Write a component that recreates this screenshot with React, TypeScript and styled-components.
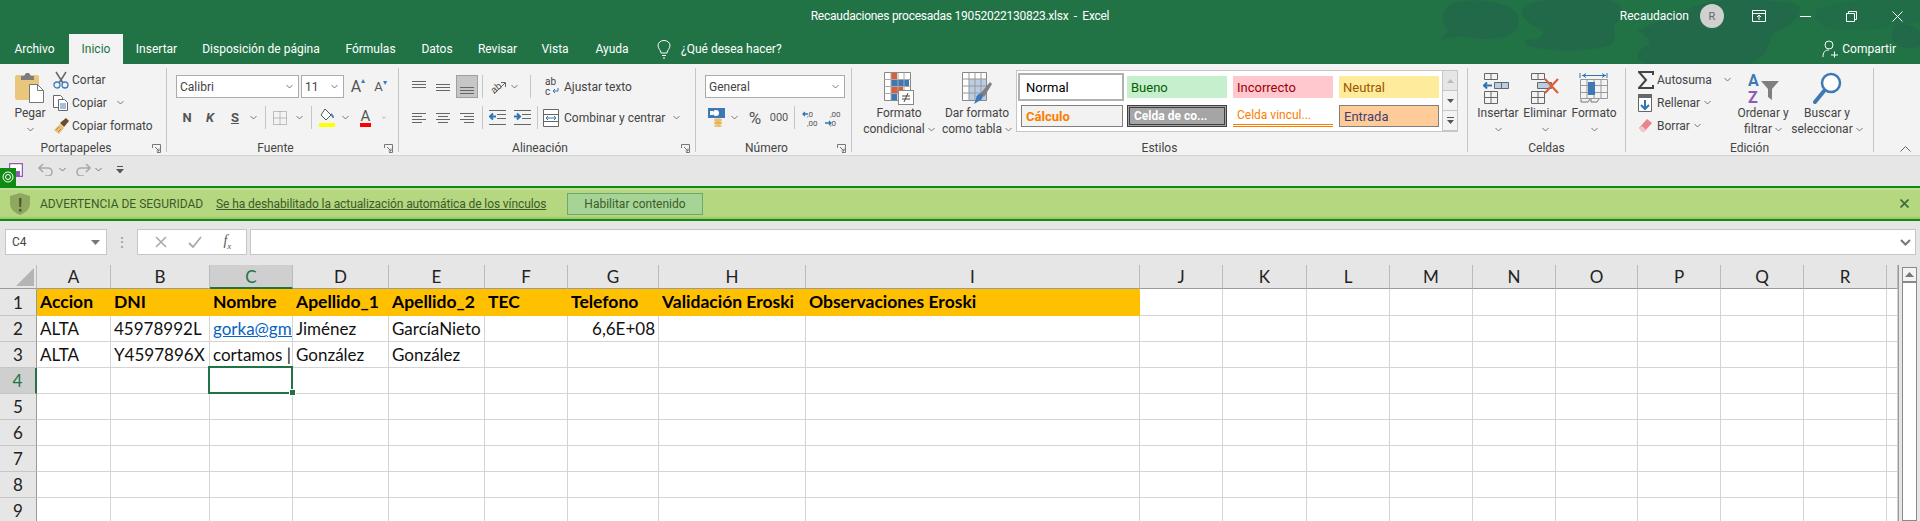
import { FunctionComponent, ReactNode } from "react";
import styled, { createGlobalStyle, css } from "styled-components";

const COLS = [74, 99, 83, 96, 96, 83, 91, 147, 334, 83, 84, 83, 83, 83, 82, 83, 83, 83, 11];
const LETTERS = "ABCDEFGHIJKLMNOPQR".split("").concat("");
const ROWS: Record<number, string[]> = {
  1: ["Accion", "DNI", "Nombre", "Apellido_1", "Apellido_2", "TEC", "Telefono", "Validación Eroski", "Observaciones Eroski"],
  2: ["ALTA", "45978992L", "gorka@gmail.com", "Jiménez", "GarcíaNieto", "", "6,6E+08"],
  3: ["ALTA", "Y4597896X", "cortamos |", "González", "González"],
};

const Chev = () => (
  <svg width="7" height="5" viewBox="0 0 7 5">
    <path d="M.5 1l3 3 3-3" fill="none" stroke="#777" />
  </svg>
);

const Launcher = () => (
  <svg width="9" height="9" viewBox="0 0 9 9">
    <path d="M.5 4V.5h8v8H5M3 3l4 4M7 4.5V7H4.500" fill="none" stroke="#777" />
  </svg>
);

const Lines = ({ rows }: { rows: [number, number, number][] }) => (
  <svg width="16" height="16" viewBox="0 0 16 16">
    {rows.map(([x1, x2, y]) => (
      <path key={y} d={`M${x1} ${y}.5H${x2}`} stroke="#666" />
    ))}
  </svg>
);

const PasteIcon = () => (
  <svg width="30" height="31" viewBox="0 0 30 31">
    <rect y="3" width="24" height="25" rx="2" fill="#eac67c" />
    <path d="M6 4h3l2-3h3l2 3h3v4H6z" fill="#7d7d7d" />
    <path d="M14.5 12.5h8l6 6v12h-14z" fill="#fff" stroke="#777" />
    <path d="M22.5 12.5v6h6" fill="none" stroke="#777" />
  </svg>
);

const CutIcon = () => (
  <svg width="16" height="18" viewBox="0 0 16 18">
    <path d="M3 1l7 11M13 1L6 12" stroke="#666" strokeWidth="1.5" />
    <circle cx="4" cy="14" r="3" fill="none" stroke="#3f7cbf" strokeWidth="1.3" />
    <circle cx="12" cy="14" r="3" fill="none" stroke="#3f7cbf" strokeWidth="1.3" />
  </svg>
);

const CopyIcon = () => (
  <svg width="16" height="16" viewBox="0 0 16 16" fill="#fff" stroke="#666">
    <path d="M.5.5h7l2 2v10h-9z" />
    <path d="M5.5 4.5h6l3 3v8h-9z" />
    <path d="M7 9h6M7 11h6M7 13h6" stroke="#4a7ebb" />
  </svg>
);

const BrushIcon = () => (
  <svg width="17" height="17" viewBox="0 0 17 17">
    <path d="M1 13l6-6 4 4-5 6z" fill="#e8c074" />
    <path d="M7 6l6-5 3 3-5 6z" fill="#6b4b2a" />
    <path d="M3 13l3-3M5 15l3-3" stroke="#b08a40" />
  </svg>
);

const BorderIcon = () => (
  <svg width="14" height="14" viewBox="0 0 14 14">
    <path d="M.5.5h13v13H.5zM7 .5v13M.5 7h13" fill="none" stroke="#888" strokeDasharray="1 1" />
  </svg>
);

const FillIcon = () => (
  <svg width="16" height="19" viewBox="0 0 16 19">
    <path d="M6 1l6 6-5 5-5-5z" fill="#fff" stroke="#555" />
    <path d="M12 5c2 1 3 3 3 5-2 0-3-1-3-5z" fill="#4a7ebb" />
    <rect y="15" width="16" height="4" fill="#ffff00" />
  </svg>
);

const OrientIcon = () => (
  <svg width="18" height="18" viewBox="0 0 18 18">
    <text x="1" y="13" fontFamily="Roboto, sans-serif" fontSize="10" fill="#555" transform="rotate(-40 7 9)">ab</text>
    <path d="M5 16L16 5M12 4.5h4.5V9" fill="none" stroke="#666" />
  </svg>
);

const IndentIcon = ({ out }: { out?: boolean }) => (
  <svg width="17" height="15" viewBox="0 0 17 15">
    <path d="M0 .5h17M8 4.5h9M8 8.5h9M0 14.5h17" stroke="#666" />
    <path d={out ? "M1 6.5h6M4 3.5l-3 3 3 3" : "M0 6.5h6M3 3.5l3 3-3 3"} fill="none" stroke="#2f75b5" strokeWidth="2" />
  </svg>
);

const WrapIcon = () => (
  <svg width="16" height="20" viewBox="0 0 16 20">
    <text x="1" y="8" fontFamily="Roboto, sans-serif" fontSize="10" fill="#444">ab</text>
    <text x="1" y="18" fontFamily="Roboto, sans-serif" fontSize="10" fill="#444">c</text>
    <path d="M14 11v3H9M11 12l-2 2 2 2" fill="none" stroke="#2f75b5" />
  </svg>
);

const MergeIcon = () => (
  <svg width="16" height="18" viewBox="0 0 16 18">
    <path d="M.5.5h15v17H.5zM.5 5.5h15M.5 12.5h15" fill="#fff" stroke="#666" />
    <path d="M3 9h10M5 7L3 9l2 2M11 7l2 2-2 2" fill="none" stroke="#2f75b5" />
  </svg>
);

const MoneyIcon = () => (
  <svg width="17" height="19" viewBox="0 0 17 19">
    <rect width="17" height="10" fill="#3f79b5" />
    <circle cx="8" cy="5" r="3" fill="#fff" />
    <rect x="2" y="3" width="3" height="4" fill="#fff" />
    <ellipse cx="10" cy="12" rx="4" ry="1.8" fill="#e8c074" />
    <ellipse cx="10" cy="15" rx="4" ry="1.8" fill="#e8b45a" />
    <ellipse cx="10" cy="18" rx="4" ry="1" fill="#e8c074" />
  </svg>
);

const DecimalIcon = ({ up }: { up?: boolean }) => (
  <svg width="16" height="18" viewBox="0 0 16 18">
    <text x="5" y="8" fontFamily="Roboto, sans-serif" fontSize="8" fill="#555">{up ? ",0" : ",00"}</text>
    <text x="5" y="17" fontFamily="Roboto, sans-serif" fontSize="8" fill="#555">{up ? ",00" : ",0"}</text>
    <path d={up ? "M1 5h5M3 3L1 5l2 2" : "M0 14h6M4 12l2 2-2 2"} fill="none" stroke="#2f75b5" strokeWidth="1.3" />
  </svg>
);

const CondFormatIcon = () => (
  <svg width="30" height="33" viewBox="0 0 30 33">
    <path d="M.5.5h26v28H.5z" fill="#fff" stroke="#888" />
    <rect x="7" y="1" width="6" height="6" fill="#d9603c" />
    <rect x="7" y="8" width="18" height="6" fill="#3f79b5" />
    <rect x="7" y="15" width="12" height="6" fill="#d9603c" />
    <rect x="7" y="22" width="6" height="6" fill="#3f79b5" />
    <path d="M7 .5v28M14 .5v28M20 .5v28M.5 7.5h26M.5 14.5h26M.5 21.5h26" stroke="#aaa" />
    <rect x="14.5" y="18.5" width="15" height="14" fill="#fff" stroke="#888" />
    <path d="M18 24h8M18 27h8M24 21l-4 9" stroke="#444" />
  </svg>
);

const TableFormatIcon = () => (
  <svg width="30" height="33" viewBox="0 0 30 33">
    <path d="M.5.5h24v28H.5z" fill="#fff" stroke="#888" />
    <rect x="7" y="7" width="17" height="21" fill="#b9cde5" />
    <path d="M7 .5v28M13 .5v28M19 .5v28M.5 7h24M.5 14h24M.5 21h24" stroke="#999" />
    <path d="M18 22l10-12 2 2-8 13z" fill="#7f7f7f" />
    <path d="M14 27c0-4 3-6 6-5 2 2 0 6-3 7l-5 3z" fill="#3f79b5" />
  </svg>
);

const CellBlocks = ({ children }: { children: ReactNode }) => (
  <svg width="30" height="32" viewBox="0 0 30 32" fill="none" stroke="#666">
    {children}
  </svg>
);

const InsertIcon = () => (
  <CellBlocks>
    <path d="M1.5 1.5h13v6h-13zM8 1.5v6M1.5 19.5h13v12h-13zM8 19.5v12M1.5 25.5h13" />
    <path d="M11.5 10.5h14v6h-14zM18.5 10.5v6" fill="#b9cde5" />
    <path d="M1 13.5h8M4 10.5l-3 3 3 3" stroke="#2f75b5" strokeWidth="2" />
  </CellBlocks>
);

const DeleteIcon = () => (
  <CellBlocks>
    <path d="M1.5 1.5h13v6h-13zM8 1.5v6M1.5 19.5h13v12h-13zM8 19.5v12M1.5 25.5h13" />
    <path d="M7.5 10.5h14v6h-14z" fill="#b9cde5" />
    <path d="M15 7l13 14M28 7L15 21" stroke="#d9603c" strokeWidth="2.2" />
  </CellBlocks>
);

const CellFormatIcon = () => (
  <CellBlocks>
    <path d="M1 1v5M28 1v5M3 3.5h24M4 3.5l3-2M4 3.5l3 2M26 3.5l-3-2M26 3.5l-3 2" stroke="#2f75b5" />
    <path d="M1.5 7.5h27v19h-27zM8 7.5v19M15 7.5v19M22 7.5v19M1.5 13.5h27M1.5 20.5h27" stroke="#999" />
    <rect x="9" y="10" width="7" height="13" fill="#3f79b5" stroke="none" />
    <path d="M2 27v3h7l2-3M12 27v3h6l2-3" stroke="#777" />
  </CellBlocks>
);

const SigmaIcon = () => (
  <svg width="16" height="18" viewBox="0 0 16 18">
    <path d="M15 4V1H1l7 8-7 8h14v-3" fill="none" stroke="#444" strokeWidth="2" />
  </svg>
);

const FillDownIcon = () => (
  <svg width="14" height="18" viewBox="0 0 14 18">
    <path d="M.5.5h13v17H.5z" fill="#fff" stroke="#666" />
    <rect width="14" height="4" fill="#666" />
    <path d="M7 6v9M3 11l4 4 4-4" fill="none" stroke="#2f75b5" strokeWidth="2" />
  </svg>
);

const EraserIcon = () => (
  <svg width="15" height="15" viewBox="0 0 15 15">
    <path d="M1 10l8-9 5 4-8 9H4z" fill="#e9848f" />
    <path d="M1 10l3 4h2l2-2-4-4z" fill="#f6c6cb" />
  </svg>
);

const SortIcon = () => (
  <svg width="31" height="32" viewBox="0 0 31 32">
    <text x="0" y="14" fontFamily="Roboto, sans-serif" fontWeight="700" fontSize="16" fill="#3f79b5">A</text>
    <text x="0" y="31" fontFamily="Roboto, sans-serif" fontWeight="700" fontSize="16" fill="#8e5bb5">Z</text>
    <path d="M13 9h18l-7 8v11l-4-3v-8z" fill="#7f7f7f" />
  </svg>
);

const SearchIcon = () => (
  <svg width="29" height="33" viewBox="0 0 29 33" fill="none">
    <circle cx="18" cy="11" r="9" stroke="#3f79b5" strokeWidth="2.5" fill="#fff" />
    <path d="M11 19L2 30" stroke="#3f79b5" strokeWidth="4" strokeLinecap="round" />
  </svg>
);

// dark shapes of the Office background pattern, behind the title bar
const Watermark = () => (
  <svg width="520" height="64" viewBox="0 0 520 64" fill="#22694a">
    <path transform="translate(31 0)" d="M20 4c18-6 46-4 60 4 12 8 10 22-4 28-12 4-34 4-44 0L8 40c6-4 10-8 6-14-4-8-2-18 6-22z" />
    <path transform="translate(17 0)" d="M108 6c10-8 50-8 84-6 18 4 14 18 6 24-4 10 6 16-8 22-20 6-56 6-80 0l-2-6c14 0 24-6 14-12-14-6-22-14-14-22z" />
    <path transform="translate(19 0)" d="M218 30c30-10 60-30 90-30 30 0 64 0 72 6 4 10-10 22-24 26-10 12-4 24-26 32H228c-14-4-10-14 0-18 6-4 0-10-10-16z" />
    <path d="M420 8c30-10 80-10 100-8v22c-30 6-60 10-84 8-18-2-28-16-16-22z" opacity=".6" />
    <path d="M496 26c14-4 24 2 24 8v12c-8 4-20 2-24-2-6-6-6-14 0-18z" />
  </svg>
);

const App: FunctionComponent = () => (
  <Page>
    <GlobalStyle />
    <TitleBar>
      <WatermarkLayer><Watermark /></WatermarkLayer>
      <TitleRow>
        <span />
        <DocTitle>Recaudaciones procesadas 19052022130823.xlsx&nbsp; - &nbsp;Excel</DocTitle>
        <WindowSide>
          <UserName>Recaudacion</UserName>
          <Avatar>R</Avatar>
          <WinButton>
            <svg width="14" height="12" viewBox="0 0 14 12" fill="none" stroke="#fff"><path d="M.5.5h13v11H.5zM.5 3.5h13M7 10V5.5M5 7l2-2 2 2" /></svg>
          </WinButton>
          <WinButton>
            <svg width="11" height="1" viewBox="0 0 11 1"><path d="M0 .5h11" stroke="#fff" /></svg>
          </WinButton>
          <WinButton>
            <svg width="11" height="11" viewBox="0 0 11 11" fill="none" stroke="#fff"><path d="M.5 2.5h8v8h-8zM2.5 2.5v-2h8v8h-2" /></svg>
          </WinButton>
          <WinButton>
            <svg width="11" height="11" viewBox="0 0 11 11" stroke="#fff"><path d="M.5.5l10 10M10.5.5l-10 10" /></svg>
          </WinButton>
        </WindowSide>
      </TitleRow>
      <TabRow>
        <Tab $w={69}>Archivo</Tab>
        <Tab $w={54} $active>Inicio</Tab>
        <Tab $w={67}>Insertar</Tab>
        <Tab $w={142}>Disposición de página</Tab>
        <Tab $w={77}>Fórmulas</Tab>
        <Tab $w={56}>Datos</Tab>
        <Tab $w={65}>Revisar</Tab>
        <Tab $w={50}>Vista</Tab>
        <Tab $w={64}>Ayuda</Tab>
        <TellMe>
          <svg width="14" height="19" viewBox="0 0 14 19" fill="none" stroke="#fff"><path d="M4 13c0-3-3-4-3-7.5a6 5 0 0 1 12 0C13 9 10 10 10 13zM5 15.5h4M6 18h2" /></svg>
          <span>¿Qué desea hacer?</span>
        </TellMe>
        <Share>
          <svg width="16" height="18" viewBox="0 0 16 18" fill="none" stroke="#fff"><circle cx="7" cy="5" r="4" /><path d="M1 17c0-5 2-7 6-7M9 15h7M12.5 11.5v6" /></svg>
          <span>Compartir</span>
        </Share>
      </TabRow>
    </TitleBar>

    <Ribbon>
      <Group $w={167}>
        <GroupBody $left={14}>
          <BigButton $w={32}>
            <BigIcon><PasteIcon /></BigIcon>
            <BigLine>Pegar</BigLine>
            <BigLine><Chev /></BigLine>
          </BigButton>
          <SmallColumn $ml={7}>
            <SmallButton><IconSlot><CutIcon /></IconSlot>Cortar</SmallButton>
            <SmallButton><IconSlot><CopyIcon /></IconSlot>Copiar<ChevGap $w={10}><Chev /></ChevGap></SmallButton>
            <SmallButton><IconSlot><BrushIcon /></IconSlot>Copiar formato</SmallButton>
          </SmallColumn>
        </GroupBody>
        <GroupFoot><FootLabel>Portapapeles</FootLabel><FootLauncher><Launcher /></FootLauncher></GroupFoot>
      </Group>

      <Group $w={232}>
        <GroupRows $left={9}>
          <ToolRow>
            <SelectBox $w={123}>Calibri<Chev /></SelectBox>
            <SelectBox $w={43} $ml={2}>11<Chev /></SelectBox>
            <Slot $w={22} $ml={3}><GrowA $size={16}>A<sup>▴</sup></GrowA></Slot>
            <Slot $w={23}><GrowA $size={13}>A<sup>▾</sup></GrowA></Slot>
          </ToolRow>
          <ToolRow>
            <Slot $w={22}><FontMark $weight={700}>N</FontMark></Slot>
            <Slot $w={24}><FontMark $weight={700} $italic>K</FontMark></Slot>
            <Slot $w={26}><FontMark $weight={700} $underline>S</FontMark></Slot>
            <Slot $w={10}><Chev /></Slot>
            <Slot $w={14}><Sep /></Slot>
            <Slot $w={16}><BorderIcon /></Slot>
            <Slot $w={22}><Chev /></Slot>
            <Slot $w={2}><Sep /></Slot>
            <Slot $w={29}><FillIcon /></Slot>
            <Slot $w={8}><Chev /></Slot>
            <Slot $w={33}><ColorA>A</ColorA></Slot>
            <Slot $w={4}><Chev /></Slot>
          </ToolRow>
        </GroupRows>
        <GroupFoot><FootLabel>Fuente</FootLabel><FootLauncher><Launcher /></FootLauncher></GroupFoot>
      </Group>

      <Group $w={297}>
        <GroupRows $left={8}>
          <ToolRow>
            <Slot $w={24}><Lines rows={[[1, 15, 2], [1, 15, 5], [1, 15, 8]]} /></Slot>
            <Slot $w={24}><Lines rows={[[1, 15, 5], [1, 15, 8], [1, 15, 11]]} /></Slot>
            <ActiveSlot><Lines rows={[[1, 15, 8], [1, 15, 11], [1, 15, 14]]} /></ActiveSlot>
            <Slot $w={8}><Sep /></Slot>
            <Slot $w={24}><OrientIcon /></Slot>
            <Slot $w={8}><Chev /></Slot>
            <Slot $w={25}><Sep /></Slot>
            <Slot $w={18}><WrapIcon /></Slot>
            <WideText $ml={3}>Ajustar texto</WideText>
          </ToolRow>
          <ToolRow>
            <Slot $w={24}><Lines rows={[[1, 15, 3], [1, 11, 6], [1, 15, 9], [1, 11, 12]]} /></Slot>
            <Slot $w={24}><Lines rows={[[1, 15, 3], [3, 13, 6], [1, 15, 9], [3, 13, 12]]} /></Slot>
            <Slot $w={24}><Lines rows={[[1, 15, 3], [5, 15, 6], [1, 15, 9], [5, 15, 12]]} /></Slot>
            <Slot $w={6}><Sep /></Slot>
            <Slot $w={25}><IndentIcon out /></Slot>
            <Slot $w={24}><IndentIcon /></Slot>
            <Slot $w={6}><Sep /></Slot>
            <Slot $w={21}><MergeIcon /></Slot>
            <WideText $ml={3}>Combinar y centrar</WideText>
            <ChevGap $w={8}><Chev /></ChevGap>
          </ToolRow>
        </GroupRows>
        <GroupFoot><FootLabel>Alineación</FootLabel><FootLauncher><Launcher /></FootLauncher></GroupFoot>
      </Group>

      <Group $w={156}>
        <GroupRows $left={9}>
          <ToolRow>
            <SelectBox $w={140}>General<Chev /></SelectBox>
          </ToolRow>
          <ToolRow>
            <Slot $w={22}><MoneyIcon /></Slot>
            <Slot $w={14}><Chev /></Slot>
            <Slot $w={28}><FontMark $weight={400} $size={17}>%</FontMark></Slot>
            <Slot $w={20}><FontMark $weight={400} $size={11}>000</FontMark></Slot>
            <Slot $w={10}><Sep /></Slot>
            <Slot $w={22}><DecimalIcon up /></Slot>
            <Slot $w={24}><DecimalIcon /></Slot>
          </ToolRow>
        </GroupRows>
        <GroupFoot><FootLabel>Número</FootLabel><FootLauncher><Launcher /></FootLauncher></GroupFoot>
      </Group>

      <Group $w={616}>
        <GroupBody $left={4}>
          <BigButton $w={86}>
            <BigIcon><CondFormatIcon /></BigIcon>
            <BigLine>Formato</BigLine>
            <BigLine>condicional <Chev /></BigLine>
          </BigButton>
          <BigButton $w={70}>
            <BigIcon><TableFormatIcon /></BigIcon>
            <BigLine>Dar formato</BigLine>
            <BigLine>como tabla <Chev /></BigLine>
          </BigButton>
          <Gallery>
            <GalleryGrid>
              <StyleItem $kind="normal">Normal</StyleItem>
              <StyleItem $kind="good">Bueno</StyleItem>
              <StyleItem $kind="bad">Incorrecto</StyleItem>
              <StyleItem $kind="neutral">Neutral</StyleItem>
              <StyleItem $kind="calc">Cálculo</StyleItem>
              <StyleItem $kind="check">Celda de co...</StyleItem>
              <StyleItem $kind="linked">Celda vincul...</StyleItem>
              <StyleItem $kind="input">Entrada</StyleItem>
            </GalleryGrid>
            <GalleryScroll>
              <GalleryArrow $dim>
                <svg width="7" height="4" viewBox="0 0 7 4"><path d="M3.5 0L7 4H0z" fill="#bbb" /></svg>
              </GalleryArrow>
              <GalleryArrow>
                <svg width="7" height="4" viewBox="0 0 7 4"><path d="M0 0h7L3.500 4z" fill="#555" /></svg>
              </GalleryArrow>
              <GalleryArrow>
                <svg width="7" height="7" viewBox="0 0 7 7"><path d="M0 .5h7" stroke="#555" /><path d="M0 3h7L3.500 7z" fill="#555" /></svg>
              </GalleryArrow>
            </GalleryScroll>
          </Gallery>
        </GroupBody>
        <GroupFoot><FootLabel>Estilos</FootLabel></GroupFoot>
      </Group>

      <Group $w={158}>
        <GroupBody $left={6}>
          <BigButton $w={48}>
            <BigIcon><InsertIcon /></BigIcon>
            <BigLine>Insertar</BigLine>
            <BigLine><Chev /></BigLine>
          </BigButton>
          <BigButton $w={46}>
            <BigIcon><DeleteIcon /></BigIcon>
            <BigLine>Eliminar</BigLine>
            <BigLine><Chev /></BigLine>
          </BigButton>
          <BigButton $w={52}>
            <BigIcon><CellFormatIcon /></BigIcon>
            <BigLine>Formato</BigLine>
            <BigLine><Chev /></BigLine>
          </BigButton>
        </GroupBody>
        <GroupFoot><FootLabel>Celdas</FootLabel></GroupFoot>
      </Group>

      <Group $w={248}>
        <GroupBody $left={12}>
          <SmallColumn $w={96}>
            <SmallButton><IconSlot><SigmaIcon /></IconSlot>Autosuma<ChevGap $w={12}><Chev /></ChevGap></SmallButton>
            <SmallButton><IconSlot><FillDownIcon /></IconSlot>Rellenar<ChevGap $w={4}><Chev /></ChevGap></SmallButton>
            <SmallButton><IconSlot><EraserIcon /></IconSlot>Borrar<ChevGap $w={4}><Chev /></ChevGap></SmallButton>
          </SmallColumn>
          <BigButton $w={58}>
            <BigIcon><SortIcon /></BigIcon>
            <BigLine>Ordenar y</BigLine>
            <BigLine>filtrar <Chev /></BigLine>
          </BigButton>
          <BigButton $w={70}>
            <BigIcon><SearchIcon /></BigIcon>
            <BigLine>Buscar y</BigLine>
            <BigLine>seleccionar <Chev /></BigLine>
          </BigButton>
        </GroupBody>
        <GroupFoot><FootLabel>Edición</FootLabel></GroupFoot>
      </Group>

      <CollapseCell>
        <svg width="11" height="6" viewBox="0 0 11 6"><path d="M.5 5.5l5-5 5 5" fill="none" stroke="#666" /></svg>
      </CollapseCell>
    </Ribbon>

    <QuickBar>
      <QuickBadge>
        <svg width="12" height="12" viewBox="0 0 12 12" fill="none" stroke="#fff"><circle cx="6" cy="6" r="5" /><circle cx="6" cy="6" r="2.5" /></svg>
      </QuickBadge>
      <Slot $w={14} $ml={9}>
        <svg width="14" height="14" viewBox="0 0 14 14"><path d="M.5.5h13v13H.5z" fill="#fff" stroke="#8e5bb5" strokeWidth="1.5" /><rect x="3" y="8" width="8" height="6" fill="#8e5bb5" /></svg>
      </Slot>
      <Slot $w={16} $ml={14}>
        <svg width="15" height="13" viewBox="0 0 15 13" fill="none" stroke="#aaa" strokeWidth="1.6"><path d="M1 5h9a4 4 0 0 1 0 8H7M5 1L1 5l4 4" /></svg>
      </Slot>
      <Slot $w={14} $ml={2}><Chev /></Slot>
      <Slot $w={16} $ml={6}>
        <svg width="15" height="13" viewBox="0 0 15 13" fill="none" stroke="#aaa" strokeWidth="1.6"><path d="M14 5H5a4 4 0 0 0 0 8h3M10 1l4 4-4 4" /></svg>
      </Slot>
      <Slot $w={14}><Chev /></Slot>
      <Slot $w={12} $ml={9}>
        <svg width="8" height="8" viewBox="0 0 8 8"><path d="M1 .5h6" stroke="#555" /><path d="M0 3h8L4 7.5z" fill="#555" /></svg>
      </Slot>
    </QuickBar>

    <MessageBar>
      <svg width="20" height="22" viewBox="0 0 20 22">
        <path d="M10 0l10 3v8c0 5-5 9-10 11C5 20 0 16 0 11V3z" fill="#8fa860" />
        <path d="M9 5h2.5l-.3 9H9.3zM9 16h2.5v2.5H9z" fill="#4f5a28" />
      </svg>
      <MessageTitle>ADVERTENCIA DE SEGURIDAD</MessageTitle>
      <MessageLink>Se ha deshabilitado la actualización automática de los vínculos</MessageLink>
      <EnableButton>Habilitar contenido</EnableButton>
      <MessageClose>
        <svg width="9" height="9" viewBox="0 0 9 9" stroke="#3f6e3a" strokeWidth="1.8"><path d="M.5.5l8 8M8.5.5l-8 8" /></svg>
      </MessageClose>
    </MessageBar>

    <FormulaBar>
      <NameBox>C4<svg width="9" height="5" viewBox="0 0 9 5"><path d="M0 0h9L4.5 5z" fill="#777" /></svg></NameBox>
      <FormulaDots>⋮</FormulaDots>
      <FormulaTools>
        <svg width="12" height="12" viewBox="0 0 12 12" stroke="#aaa" strokeWidth="1.6"><path d="M1 1l10 10M11 1L1 11" /></svg>
        <svg width="14" height="12" viewBox="0 0 14 12" fill="none" stroke="#aaa" strokeWidth="1.8"><path d="M1 7l4 4 8-10" /></svg>
        <FxMark>f<sub>x</sub></FxMark>
      </FormulaTools>
      <FormulaInput>
        <svg width="11" height="7" viewBox="0 0 11 7" fill="none" stroke="#777" strokeWidth="2"><path d="M1 1l4.5 4.5L10 1" /></svg>
      </FormulaInput>
    </FormulaBar>

    <SheetArea>
      <SheetGrid>
        <Corner><svg width="18" height="18" viewBox="0 0 18 18"><path d="M18 0v18H0z" fill="#b4b4b4" /></svg></Corner>
        {LETTERS.map((l, i) => (
          <ColHead key={i} $selected={l === "C"}>{l}</ColHead>
        ))}
        {[1, 2, 3, 4, 5, 6, 7, 8, 9].map(r => (
          <SheetRow key={r} row={r} />
        ))}
      </SheetGrid>
      <ScrollTrack>
        <ScrollBox>
          <ScrollUp><svg width="9" height="5" viewBox="0 0 9 5"><path d="M4.5 0L9 5H0z" fill="#777" /></svg></ScrollUp>
        </ScrollBox>
      </ScrollTrack>
    </SheetArea>
  </Page>
);

const SheetRow: FunctionComponent<{ row: number }> = ({ row }) => (
  <>
    <RowHead $selected={row === 4}>{row}</RowHead>
    {LETTERS.map((_, c) => {
      const value = ROWS[row]?.[c] ?? "";
      return (
        <Cell
          key={c}
          $head={row === 1 && c < 9}
          $link={row === 2 && c === 2}
          $right={row === 2 && c === 6}
          $active={row === 4 && c === 2}
        >
          {value}
        </Cell>
      );
    })}
  </>
);

const GlobalStyle = createGlobalStyle`
  html, body { margin: 0; padding: 0; background: #fff; }
  body { font-family: Roboto, "Liberation Sans", sans-serif; font-size: 12px; color: #444; }
`;

const Page = styled.div`
  width: 1920px;
  height: 521px;
  overflow: hidden;
  display: flex;
  flex-direction: column;
  position: relative;
`;

const TitleBar = styled.header`
  position: relative;
  height: 64px;
  background: #217346;
  color: #fff;
  flex: none;
`;

const WatermarkLayer = styled.div`
  position: absolute;
  right: 0;
  top: 0;
  height: 64px;
  line-height: 0;
`;

const TitleRow = styled.div`
  position: relative;
  height: 32px;
  display: grid;
  grid-template-columns: 1fr auto 1fr;
  align-items: center;
`;

const DocTitle = styled.div`
  font-size: 12px;
  letter-spacing: -0.25px;
  white-space: nowrap;
`;

const WindowSide = styled.div`
  display: flex;
  justify-content: flex-end;
  align-items: center;
`;

const UserName = styled.span`
  margin-right: 11px;
`;

const Avatar = styled.div`
  width: 24px;
  height: 24px;
  border-radius: 50%;
  background: #d0d0d0;
  color: #666;
  font-size: 11px;
  display: flex;
  align-items: center;
  justify-content: center;
  margin-right: 12px;
`;

const WinButton = styled.div`
  width: 46px;
  height: 30px;
  display: flex;
  align-items: center;
  justify-content: center;
`;

const TabRow = styled.nav`
  position: relative;
  display: flex;
  height: 32px;
  align-items: flex-end;
`;

const Tab = styled.div<{ $w: number; $active?: boolean }>`
  width: ${p => p.$w}px;
  height: 30px;
  display: flex;
  align-items: center;
  justify-content: center;
  font-size: 12px;
  ${p => p.$active && css`
    background: #f3f3f3;
    color: #217346;
  `}
`;

const TellMe = styled.div`
  display: flex;
  align-items: center;
  height: 30px;
  gap: 10px;
  margin-left: 13px;
`;

const Share = styled.div`
  margin-left: auto;
  margin-right: 24px;
  height: 30px;
  display: flex;
  align-items: center;
  gap: 4px;
`;

const Ribbon = styled.section`
  flex: none;
  height: 92px;
  box-sizing: border-box;
  display: flex;
  background: #f3f3f3;
  border-bottom: 1px solid #d2d2d2;
  padding-top: 4px;
`;

const Group = styled.div<{ $w: number }>`
  position: relative;
  width: ${p => p.$w}px;
  height: 84px;
  box-sizing: border-box;
  border-right: 1px solid #c6c6c6;
  flex: none;
  display: flex;
  flex-direction: column;
`;

const GroupBody = styled.div<{ $left: number }>`
  height: 72px;
  display: flex;
  padding-left: ${p => p.$left}px;
`;

const GroupRows = styled.div<{ $left: number }>`
  height: 72px;
  box-sizing: border-box;
  padding: 7px 0 0 ${p => p.$left}px;
  display: flex;
  flex-direction: column;
  gap: 8px;
`;

const GroupFoot = styled.div`
  display: flex;
  height: 12px;
  line-height: 16px;
`;

const FootLabel = styled.div`
  flex: 1;
  text-align: center;
  color: #444;
`;

const FootLauncher = styled.div`
  width: 14px;
  padding-top: 4px;
  line-height: 0;
`;

const BigButton = styled.div<{ $w: number }>`
  width: ${p => p.$w}px;
  flex: none;
  padding-top: 4px;
  display: flex;
  flex-direction: column;
  align-items: center;
`;

const BigIcon = styled.div`
  height: 33px;
  line-height: 0;
`;

const BigLine = styled.div`
  height: 16px;
  line-height: 16px;
  white-space: nowrap;
  display: flex;
  align-items: center;
  gap: 3px;
`;

const SmallColumn = styled.div<{ $ml?: number; $w?: number }>`
  display: flex;
  flex-direction: column;
  margin-left: ${p => p.$ml ?? 0}px;
  width: ${p => (p.$w ? `${p.$w}px` : "auto")};
`;

const SmallButton = styled.div`
  height: 23px;
  display: flex;
  align-items: center;
  white-space: nowrap;
`;

const IconSlot = styled.span`
  width: 19px;
  display: flex;
  justify-content: flex-start;
`;

const ChevGap = styled.span<{ $w: number }>`
  display: inline-flex;
  margin-left: ${p => p.$w}px;
`;

const ToolRow = styled.div`
  display: flex;
  height: 23px;
  align-items: center;
`;

const Slot = styled.div<{ $w: number; $ml?: number }>`
  width: ${p => p.$w}px;
  margin-left: ${p => p.$ml ?? 0}px;
  flex: none;
  display: flex;
  align-items: center;
  justify-content: center;
`;

const ActiveSlot = styled.div`
  width: 22px;
  height: 23px;
  margin-left: 1px;
  box-sizing: border-box;
  background: #c6c6c6;
  border: 1px solid #a0a0a0;
  display: flex;
  align-items: center;
  justify-content: center;
`;

const Sep = styled.div`
  width: 1px;
  height: 23px;
  background: #c6c6c6;
`;

const SelectBox = styled.div<{ $w: number; $ml?: number }>`
  width: ${p => p.$w}px;
  height: 23px;
  margin-left: ${p => p.$ml ?? 0}px;
  box-sizing: border-box;
  background: #fff;
  border: 1px solid #ababab;
  padding: 0 5px 0 3px;
  display: flex;
  align-items: center;
  justify-content: space-between;
`;

const GrowA = styled.span<{ $size: number }>`
  font-size: ${p => p.$size}px;
  color: #555;
  sup {
    font-size: 8px;
    color: #3f79b5;
    vertical-align: top;
    line-height: 8px;
  }
`;

const FontMark = styled.span<{ $weight: number; $italic?: boolean; $underline?: boolean; $size?: number }>`
  font-size: ${p => p.$size ?? 13}px;
  font-weight: ${p => p.$weight};
  font-style: ${p => (p.$italic ? "italic" : "normal")};
  text-decoration: ${p => (p.$underline ? "underline" : "none")};
  color: #555;
`;

const ColorA = styled.span`
  font-size: 15px;
  line-height: 14px;
  color: #555;
  border-bottom: 4px solid #ff0000;
  padding: 0 1px;
`;

const WideText = styled.span<{ $ml: number }>`
  margin-left: ${p => p.$ml}px;
  white-space: nowrap;
`;

const Gallery = styled.div`
  width: 442px;
  height: 62px;
  margin: 2px 0 0 4px;
  box-sizing: border-box;
  background: #fff;
  border: 1px solid #c6c6c6;
  display: flex;
  justify-content: space-between;
  flex: none;
`;

const GalleryGrid = styled.div`
  display: grid;
  grid-template-columns: 109px 106px 106px 100px;
  grid-template-rows: 30px 28px;
  padding: 1px 0 0 1px;
  font-size: 13px;
`;

const KINDS = {
  normal: css`width: 106px; height: 28px; background: #fff; border: 2px solid #b0b0b0; color: #000; padding-left: 6px;`,
  good: css`width: 100px; height: 22px; background: #c6efce; color: #006100;`,
  bad: css`width: 100px; height: 22px; background: #ffc7ce; color: #9c0006;`,
  neutral: css`width: 100px; height: 22px; background: #ffeb9c; color: #9c5700;`,
  calc: css`width: 102px; height: 22px; margin-left: 3px; background: #f2f2f2; border: 1px solid #7f7f7f; color: #fa7d00; font-weight: 700;`,
  check: css`width: 100px; height: 22px; background: #a5a5a5; border: 3px double #3f3f3f; color: #fff; font-weight: 700; font-size: 12px;`,
  linked: css`width: 100px; height: 22px; border-bottom: 3px double #fa7d00; color: #fa7d00; font-size: 12px;`,
  input: css`width: 100px; height: 22px; background: #ffcc99; border: 1px solid #7f7f7f; color: #3f3f76;`,
};

const StyleItem = styled.div<{ $kind: keyof typeof KINDS }>`
  box-sizing: border-box;
  display: flex;
  align-items: center;
  padding-left: 4px;
  align-self: center;
  white-space: nowrap;
  ${p => KINDS[p.$kind]}
`;

const GalleryScroll = styled.div`
  width: 14px;
  display: grid;
  grid-template-rows: repeat(3, 1fr);
  background: #f3f3f3;
  border-left: 1px solid #c6c6c6;
`;

const GalleryArrow = styled.div<{ $dim?: boolean }>`
  display: flex;
  align-items: center;
  justify-content: center;
  background: ${p => (p.$dim ? "#e6e6e6" : "#f3f3f3")};
  border-bottom: 1px solid #c6c6c6;
`;

const CollapseCell = styled.div`
  flex: 1;
  height: 84px;
  display: flex;
  align-items: flex-end;
  justify-content: flex-end;
  padding: 0 9px 0 0;
`;

const QuickBar = styled.div`
  flex: none;
  height: 30px;
  box-sizing: border-box;
  padding-bottom: 3px;
  background: #e6e6e6;
  display: flex;
  align-items: center;
  position: relative;
`;

const QuickBadge = styled.div`
  position: absolute;
  left: 0;
  top: 12px;
  width: 16px;
  height: 18px;
  background: #0f8a13;
  display: flex;
  align-items: center;
  justify-content: center;
  z-index: 1;
`;

const MessageBar = styled.div`
  flex: none;
  height: 35px;
  box-sizing: border-box;
  background: #b5d77f;
  border-top: 2px solid #0f8a13;
  border-bottom: 2px solid #0f8a13;
  box-shadow: inset 0 2px 0 #c3dd97, inset 0 -2px 0 #a4c86e;
  display: flex;
  align-items: center;
  padding-left: 10px;
  color: #3d5a2a;
`;

const MessageTitle = styled.span`
  margin-left: 10px;
  width: 176px;
  white-space: nowrap;
`;

const MessageLink = styled.span`
  text-decoration: underline;
  width: 351px;
  letter-spacing: -0.1px;
  white-space: nowrap;
`;

const EnableButton = styled.div`
  width: 136px;
  height: 22px;
  box-sizing: border-box;
  background: #a6d496;
  border: 1px solid #6fa86f;
  display: flex;
  align-items: center;
  justify-content: center;
`;

const MessageClose = styled.div`
  margin-left: auto;
  margin-right: 11px;
  line-height: 0;
`;

const FormulaBar = styled.div`
  flex: none;
  height: 44px;
  box-sizing: border-box;
  background: #e6e6e6;
  padding: 8px 4px 10px 5px;
  display: flex;
`;

const NameBox = styled.div`
  width: 102px;
  box-sizing: border-box;
  background: #fff;
  border: 1px solid #c6c6c6;
  padding: 0 6px;
  display: flex;
  align-items: center;
  justify-content: space-between;
  color: #444;
`;

const FormulaDots = styled.div`
  width: 30px;
  text-align: center;
  line-height: 26px;
  color: #999;
  font-size: 14px;
`;

const FormulaTools = styled.div`
  width: 110px;
  box-sizing: border-box;
  background: #fff;
  border: 1px solid #c6c6c6;
  display: flex;
  align-items: center;
  justify-content: space-around;
  padding: 0 4px 0 6px;
`;

const FxMark = styled.i`
  font-family: "Liberation Serif", serif;
  font-size: 14px;
  color: #555;
  sub {
    font-size: 9px;
  }
`;

const FormulaInput = styled.div`
  flex: 1;
  margin-left: 3px;
  box-sizing: border-box;
  background: #fff;
  border: 1px solid #c6c6c6;
  display: flex;
  align-items: center;
  justify-content: flex-end;
  padding-right: 4px;
`;

const SheetArea = styled.div`
  flex: 1;
  display: flex;
  min-height: 0;
  background: #e6e6e6;
`;

const SheetGrid = styled.div`
  width: 1899px;
  flex: none;
  display: grid;
  grid-template-columns: 37px ${COLS.map(c => `${c}px`).join(" ")};
  grid-template-rows: 24px 27px repeat(8, 26px);
  font-family: Lato, "Liberation Sans", sans-serif;
  font-size: 17px;
  color: #111;
  overflow: hidden;
  border-right: 1px solid #999;
  box-sizing: border-box;
`;

const Corner = styled.div`
  box-sizing: border-box;
  background: #e6e6e6;
  border-right: 1px solid #bbb;
  border-bottom: 1px solid #9a9a9a;
  display: flex;
  align-items: flex-end;
  justify-content: flex-end;
  padding: 0 2px 2px 0;
  line-height: 0;
`;

const ColHead = styled.div<{ $selected?: boolean }>`
  box-sizing: border-box;
  background: ${p => (p.$selected ? "#cfcfcf" : "#e6e6e6")};
  color: ${p => (p.$selected ? "#217346" : "#222")};
  border-right: 1px solid #bbb;
  border-bottom: ${p => (p.$selected ? "2px solid #217346" : "1px solid #9a9a9a")};
  display: flex;
  align-items: center;
  justify-content: center;
`;

const RowHead = styled.div<{ $selected?: boolean }>`
  box-sizing: border-box;
  background: ${p => (p.$selected ? "#cfcfcf" : "#e6e6e6")};
  color: ${p => (p.$selected ? "#217346" : "#222")};
  border-right: ${p => (p.$selected ? "2px solid #217346" : "1px solid #9a9a9a")};
  border-bottom: 1px solid #c6c6c6;
  display: flex;
  align-items: center;
  justify-content: center;
`;

const Cell = styled.div<{ $head?: boolean; $link?: boolean; $right?: boolean; $active?: boolean }>`
  position: relative;
  box-sizing: border-box;
  background: #fff;
  border-right: 1px solid #d4d4d4;
  border-bottom: 1px solid #d4d4d4;
  padding: 0 3px;
  line-height: 25px;
  white-space: nowrap;
  overflow: ${p => (p.$active ? "visible" : "hidden")};
  text-align: ${p => (p.$right ? "right" : "left")};
  ${p => p.$head && css`
    background: #ffc000;
    border-color: #ffc000;
    font-weight: 700;
    font-size: 17.5px;
    color: #000;
  `}
  ${p => p.$link && css`
    color: #0563c1;
    text-decoration: underline;
  `}
  ${p => p.$active && css`
    &::after {
      content: "";
      position: absolute;
      inset: -2px -1px -1px -2px;
      border: 2px solid #217346;
    }
    &::before {
      content: "";
      position: absolute;
      right: -4px;
      bottom: -3px;
      width: 5px;
      height: 5px;
      background: #217346;
      border: 1px solid #fff;
      z-index: 1;
    }
  `}
`;

const ScrollTrack = styled.div`
  flex: 1;
  padding: 2px 3px 0 3px;
`;

const ScrollBox = styled.div`
  height: 100%;
  box-sizing: border-box;
  background: #fff;
  border: 1px solid #8a8a8a;
`;

const ScrollUp = styled.div`
  height: 15px;
  box-sizing: border-box;
  border-bottom: 2px solid #8a8a8a;
  background: #f3f3f3;
  display: flex;
  align-items: center;
  justify-content: center;
`;

export default App;
